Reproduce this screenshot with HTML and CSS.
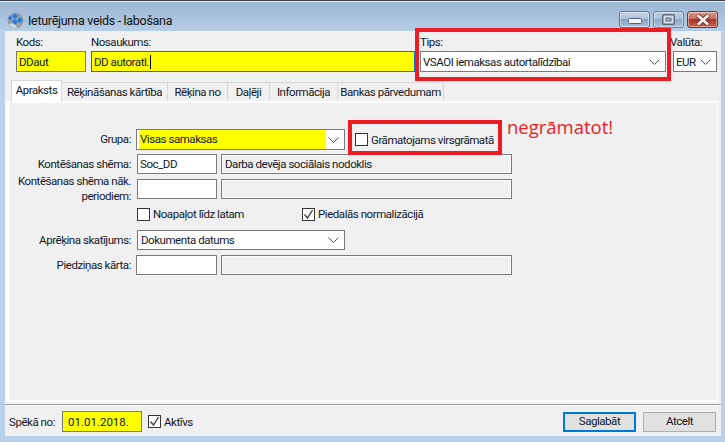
FILE: index.html
```html
<!DOCTYPE html>
<html lang="lv">
<head>
<meta charset="utf-8">
<title>Ieturējuma veids - labošana</title>
<link rel="stylesheet" href="styles.css">
</head>
<body>
<div class="window">
  <header class="titlebar">
    <svg class="app-icon" width="17" height="17" viewBox="0 0 17 17">
      <circle cx="8.5" cy="8.5" r="8" fill="#9a9fa6"/>
      <path d="M2 12a8 8 0 0 0 8 4.3L8 11z" fill="#d5d7da"/>
      <path d="M8 1l3 3-3 3-3-3zM13 5l3 3-3 3-3-3zM8 7l3 3-3 3-3-3zM3 3.500l2.500 2.500L3 8.500 1 6z" fill="#1f7fe0"/>
    </svg>
    <span class="title-text">Ieturējuma veids - labošana</span>
    <div class="win-buttons">
      <div class="win-btn">
        <svg width="14" height="6" viewBox="0 0 14 6"><rect x=".5" y=".5" width="13" height="5" rx="1" fill="#f2f4f7" stroke="#56657a"/></svg>
      </div>
      <div class="win-btn win-btn-max">
        <svg width="13" height="11" viewBox="0 0 13 11"><rect x=".75" y=".75" width="11.500" height="9.500" rx="1" fill="#e3e8ef" stroke="#4b5566" stroke-width="1.500"/><rect x="4" y="4" width="5" height="3" fill="#a9bdd6" stroke="#4b5566"/></svg>
      </div>
      <div class="win-btn win-btn-close">
        <svg width="16" height="12" viewBox="0 0 16 12"><path d="M3 1.500l10 9M13 1.500l-10 9" stroke="#5a2a20" stroke-width="4.500"/><path d="M3 1.500l10 9M13 1.500l-10 9" stroke="#f3f1ef" stroke-width="3"/></svg>
      </div>
    </div>
  </header>

  <main class="client">
    <section class="top-fields">
      <div class="field f-kods">
        <label class="top-label">Kods:</label>
        <div class="box yellow">DDaut</div>
      </div>
      <div class="field f-nos">
        <label class="top-label">Nosaukums:</label>
        <div class="box yellow focused">DD autoratl.<span class="caret"></span></div>
      </div>
      <div class="field f-tips">
        <label class="top-label">Tips:</label>
        <div class="box select"><span>VSAOI iemaksas autortalīdzībai</span>
          <svg class="chev" width="11" height="6" viewBox="0 0 11 6"><path d="M.5.500l5 5 5-5" fill="none" stroke="#555"/></svg>
        </div>
      </div>
      <div class="field f-val">
        <label class="top-label val-label">Valūta:</label>
        <div class="box select"><span>EUR</span>
          <svg class="chev" width="11" height="6" viewBox="0 0 11 6"><path d="M.5.500l5 5 5-5" fill="none" stroke="#555"/></svg>
        </div>
      </div>
    </section>

    <nav class="tabs">
      <div class="tab tab-active">Apraksts</div>
      <div class="tab t2">Rēķināšanas kārtība</div>
      <div class="tab t3">Rēķina no</div>
      <div class="tab t4">Daļēji</div>
      <div class="tab t5">Informācija</div>
      <div class="tab t6">Bankas pārvedumam</div>
    </nav>

    <section class="panel">
      <div class="panel-inner">
        <div class="row row-grupa">
          <div class="lbl">Grupa:</div>
          <div class="box select grupa"><span class="yellow-fill">Visas samaksas</span>
            <svg class="chev" width="11" height="6" viewBox="0 0 11 6"><path d="M.5.500l5 5 5-5" fill="none" stroke="#555"/></svg>
          </div>
          <div class="check virs"><span class="cb"></span><span>Grāmatojams virsgrāmatā</span></div>
        </div>
        <div class="row row-shema">
          <div class="lbl">Kontēšanas shēma:</div>
          <div class="box code">Soc_DD</div>
          <div class="box ro">Darba devēja sociālais nodoklis</div>
        </div>
        <div class="row row-nak">
          <div class="lbl lbl-two">Kontēšanas shēma nāk. periodiem:</div>
          <div class="box code"></div>
          <div class="box ro"></div>
        </div>
        <div class="row row-checks">
          <div class="check c-noap"><span class="cb"></span><span>Noapaļot līdz latam</span></div>
          <div class="check"><span class="cb"><svg width="11" height="11" viewBox="0 0 11 11"><path d="M1.500 5.500l3 3.500 5-8" fill="none" stroke="#444" stroke-width="1.400"/></svg></span><span>Piedalās normalizācijā</span></div>
        </div>
        <div class="row row-apr">
          <div class="lbl">Aprēķina skatījums:</div>
          <div class="box select apr"><span>Dokumenta datums</span>
            <svg class="chev" width="11" height="6" viewBox="0 0 11 6"><path d="M.5.500l5 5 5-5" fill="none" stroke="#555"/></svg>
          </div>
        </div>
        <div class="row row-pied">
          <div class="lbl">Piedziņas kārta:</div>
          <div class="box code code-wide"></div>
          <div class="box ro"></div>
        </div>
      </div>
    </section>

    <footer class="bottom">
      <span class="spk">Spēkā no:</span>
      <div class="box yellow date">01.01.2018.</div>
      <div class="check c-akt"><span class="cb"><svg width="11" height="11" viewBox="0 0 11 11"><path d="M1.500 5.500l3 3.500 5-8" fill="none" stroke="#444" stroke-width="1.400"/></svg></span><span>Aktīvs</span></div>
      <div class="btn btn-default">Saglabāt</div>
      <div class="btn">Atcelt</div>
    </footer>
  </main>

  <div class="mark mark-tips"></div>
  <div class="mark mark-virs"></div>
  <div class="note">negrāmatot!</div>
</div>
</body>
</html>
```

FILE: styles.css
```css
* { box-sizing: border-box; }
html, body { margin: 0; padding: 0; }
body {
  width: 725px;
  height: 442px;
  overflow: hidden;
  font-family: Roboto, "Noto Sans", sans-serif;
  font-size: 11.5px;
  letter-spacing: -.45px;
  color: #101828;
}
.window {
  position: relative;
  width: 725px;
  height: 442px;
  background: #b9d1ea;
  border-top: 1px solid #3b3f45;
  display: flex;
  flex-direction: column;
}
.titlebar {
  height: 30px;
  flex: none;
  display: flex;
  align-items: flex-start;
  padding: 9px 7px 0 7px;
  background: linear-gradient(#9db6d2, #b5cde6);
  border-top: 1px solid #e6edf5;
}
.app-icon { flex: none; margin-top: 1px; }
.title-text { margin: 1px 0 0 4px; font-size: 12.5px; line-height: 18px; letter-spacing: -.3px; color: #111; }
.win-buttons { margin-left: auto; display: flex; gap: 3px; }
.win-btn {
  width: 31px;
  height: 17px;
  border: 1px solid #5f7690;
  border-radius: 3px;
  background: linear-gradient(#c3d4e8 0, #a9c0da 50%, #87a3c2 50%, #a8c0da 100%);
  box-shadow: inset 0 0 0 1px rgba(255,255,255,.45);
  display: flex;
  align-items: center;
  justify-content: center;
}
.win-btn svg { display: block; }
.win-btn:first-child svg { margin-top: 3px; }
.win-btn-max { opacity: .8; }
.win-btn-close {
  border-color: #6b3a33;
  background: linear-gradient(#d9998c 0, #c9665a 50%, #a8382a 50%, #c8604f 100%);
}
.client {
  width: 716px;
  height: 405px;
  margin-left: 5px;
  background: #f0f0f0;
  display: flex;
  flex-direction: column;
}
.top-fields {
  height: 49px;
  flex: none;
  display: flex;
  padding: 5px 0 0 11px;
}
.field { display: flex; flex-direction: column; }
.top-label { height: 15px; line-height: 13px; white-space: nowrap; }
.val-label { margin-left: -3px; }
.f-kods { width: 70px; margin-right: 5px; }
.f-nos { width: 324px; margin-right: 5px; }
.f-tips { width: 246px; margin-right: 7px; }
.f-val { width: 44px; }
.box {
  height: 21px;
  border: 1px solid #7a7a7a;
  background: #fff;
  padding: 0 2px;
  line-height: 18px;
  white-space: nowrap;
  display: flex;
  align-items: center;
}
.yellow { background: #ffff00; }
.focused { border-color: #0078d7; }
.caret { width: 1px; height: 14px; background: #000; margin-left: 1px; }
.select { justify-content: space-between; padding-right: 4px; }
.chev { flex: none; margin-right: 1px; }
.tabs {
  height: 21px;
  flex: none;
  display: flex;
  padding-left: 6px;
  position: relative;
  z-index: 1;
}
.tab {
  height: 19px;
  margin-top: 2px;
  border: 1px solid #d9d9d9;
  border-left: 0;
  border-bottom: 0;
  background: #f0f0f0;
  text-align: center;
  line-height: 18px;
  white-space: nowrap;
}
.tab-active {
  width: 51px;
  height: 22px;
  margin-top: 0;
  border: 1px solid #d9d9d9;
  border-bottom: 0;
  background: #fff;
}
.t2 { width: 106px; }
.t3 { width: 60px; }
.t4 { width: 42px; }
.t5 { width: 68px; }
.t6 { width: 106px; }
.panel {
  height: 301px;
  flex: none;
  margin-right: 3px;
  background: #fff;
  padding: 2px 1px 2px 4px;
}
.panel-inner {
  height: 100%;
  background: #f0f0f0;
  padding-top: 26px;
}
.row { display: flex; align-items: center; }
.lbl { width: 122px; text-align: right; line-height: 15px; margin-right: 5px; flex: none; }
.row-grupa { height: 21px; }
.grupa { width: 209px; padding-left: 2px; }
.yellow-fill { background: #ffff00; width: 187px; height: 19px; line-height: 18px; display: block; padding-left: 1px; }
.check { display: flex; align-items: center; gap: 3px; }
.cb {
  width: 13px;
  height: 13px;
  border: 1px solid #333;
  background: #fff;
  flex: none;
  display: flex;
  align-items: center;
  justify-content: center;
}
.virs { margin-left: 10px; }
.row-shema { height: 20px; margin-top: 4px; }
.row-nak { height: 20px; margin-top: 5px; }
.code { width: 80px; height: 20px; margin-left: 1px; }
.ro { width: 291px; height: 20px; margin-left: 4px; background: #f0f0f0; box-shadow: inset 0 0 0 1px #fafafa; padding-left: 3px; }
.row-checks { height: 14px; margin-top: 8px; padding-left: 128px; }
.c-noap { width: 165px; }
.row-apr { height: 20px; margin-top: 9px; }
.apr { width: 208px; height: 20px; margin-left: 1px; padding-left: 3px; }
.row-pied { height: 20px; margin-top: 5px; }
.code-wide { width: 81px; margin-left: 0; }
.bottom {
  flex: 1;
  display: flex;
  align-items: center;
  border-top: 1px solid #a0a0a0;
  box-shadow: inset 0 1px 0 #fff;
  padding: 2px 5px 0 4px;
  margin-top: 2px;
}
.spk { width: 53px; flex: none; }
.date { width: 80px; padding-left: 5px; letter-spacing: 0; }
.c-akt { margin-left: 6px; }
.btn {
  width: 73px;
  height: 20px;
  margin-left: 7px;
  border: 1px solid #adadad;
  background: #e1e1e1;
  text-align: center;
  line-height: 17px;
}
.btn-default {
  margin-left: auto;
  border: 2px solid #0078d7;
  line-height: 15px;
}
.mark {
  position: absolute;
  border: 4px solid #ed1c24;
  pointer-events: none;
}
.mark-tips { left: 415px; top: 27px; width: 256px; height: 53px; }
.mark-virs { left: 348px; top: 119px; width: 154px; height: 35px; }
.note {
  position: absolute;
  left: 507px;
  top: 113px;
  color: #ed1c24;
  font-family: "Open Sans", sans-serif;
  font-size: 18.5px;
  line-height: 26px;
  letter-spacing: 0;
}
```
